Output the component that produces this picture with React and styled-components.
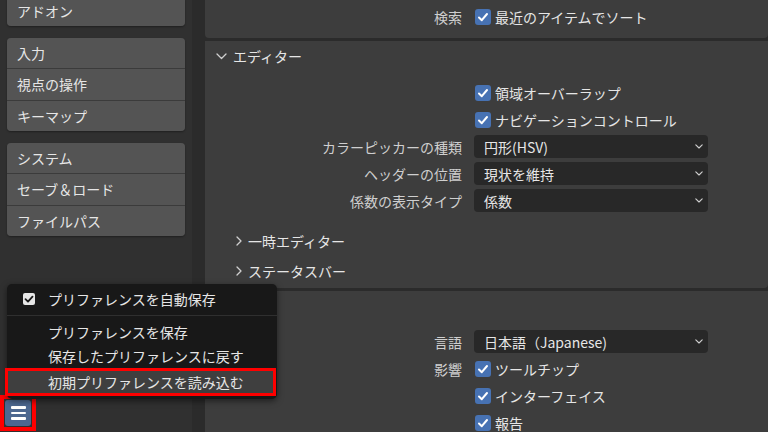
import React from "react";
import styled, { createGlobalStyle, css } from "styled-components";

const GlobalStyle = createGlobalStyle`
  html, body {
    margin: 0;
    padding: 0;
    background: #2b2b2b;
  }
  body {
    font-family: "Noto Sans CJK JP", "Noto Sans", "Liberation Sans", sans-serif;
    font-size: 14px;
    color: #e6e6e6;
  }
`;

const Window = styled.div`
  position: relative;
  display: flex;
  width: 768px;
  height: 432px;
  overflow: hidden;
  background: #2b2b2b;
`;

const Sidebar = styled.div`
  display: flex;
  flex-direction: column;
  gap: 11.5px;
  width: 192px;
  margin-top: -4.5px;
  background: #303030;
`;

const NavGroup = styled.div`
  display: flex;
  flex-direction: column;
  gap: 1px;
  margin: 0 7px;
  background: #3b3b3b;
  border-radius: 4px;
  overflow: hidden;
  box-shadow: 0 1px 2px rgba(0, 0, 0, 0.35);
`;

const NavItem = styled.div`
  display: flex;
  align-items: center;
  height: 30.5px;
  padding: 0 10px;
  background: #545454;
  color: #e6e6e6;
`;

const MenuButtonFrame = styled.div`
  margin-top: auto;
  margin-bottom: 1px;
  align-self: flex-start;
  display: flex;
  padding: 1px;
  border: 4px solid #ff0000;
`;

const MenuButton = styled.div`
  display: flex;
  flex-direction: column;
  justify-content: center;
  align-items: center;
  gap: 3px;
  width: 26px;
  height: 26px;
  border-radius: 3px;
  background: #4d6890;
`;

const Bar = styled.span`
  display: block;
  width: 15px;
  height: 2.5px;
  border-radius: 1px;
  background: #ffffff;
`;

const Gutter = styled.div`
  width: 13px;
  background: #2b2b2b;
`;

const Main = styled.div`
  flex: 1;
  display: flex;
  flex-direction: column;
  gap: 3px;
  background: #2b2b2b;
`;

const Panel = styled.section`
  display: flex;
  flex-direction: column;
  background: #3d3d3d;
  border-radius: 0 0 4px 4px;
  padding: ${(p) => p.$pad || "0 0 6px"};
  ${(p) =>
    p.$grow &&
    css`
      flex: 1;
    `}
`;

const PanelHeader = styled.div`
  display: flex;
  align-items: center;
  gap: 6px;
  height: 30px;
  padding-left: ${(p) => (p.$sub ? "31px" : "11px")};
  color: #e6e6e6;
`;

const Rows = styled.div`
  display: flex;
  flex-direction: column;
  padding: ${(p) => p.$pad || "0"};
`;

const Row = styled.div`
  display: grid;
  grid-template-columns: 257px 234px;
  column-gap: 12px;
  align-items: center;
  height: 27px;
`;

const Label = styled.span`
  text-align: right;
  color: #cfcfcf;
  white-space: nowrap;
`;

const CheckRow = styled.label`
  display: flex;
  align-items: center;
  gap: 4px;
  padding-left: 1px;
  color: #e6e6e6;
  white-space: nowrap;
`;

const Box = styled.span`
  display: flex;
  align-items: center;
  justify-content: center;
  width: 16px;
  height: 16px;
  border-radius: 3px;
  background: #4772b3;
`;

const Select = styled.div`
  display: flex;
  align-items: center;
  justify-content: space-between;
  height: 23px;
  padding: 0 5px 0 10px;
  border-radius: 4px;
  background: #282828;
  color: #e6e6e6;
  white-space: nowrap;
`;

const Popup = styled.div`
  position: absolute;
  left: 7px;
  top: 284px;
  width: 270px;
  padding: 3px 0 3px;
  border-radius: 5px;
  background: #181818;
  box-shadow: 0 2px 6px rgba(0, 0, 0, 0.5);
`;

const PopupItem = styled.div`
  display: flex;
  align-items: center;
  gap: 13px;
  height: 24px;
  padding-left: ${(p) => (p.$icon ? "16px" : "41px")};
  color: #e6e6e6;
  ${(p) =>
    p.$active &&
    css`
      margin: 0 1px 0 -2px;
      padding-left: 40px;
      height: 22px;
      background: #3f3f3f;
      border: 3px solid #ff0000;
    `}
`;

const PopupSeparator = styled.div`
  height: 1px;
  margin: 4px 0 4px;
  background: #2f2f2f;
`;

const Check = () => (
  <Box>
    <svg width="12" height="12" viewBox="0 0 12 12">
      <polyline points="2,6.5 4.8,9.2 10,3" fill="none" stroke="#fff" strokeWidth="2" strokeLinecap="round" strokeLinejoin="round" />
    </svg>
  </Box>
);

const MenuCheck = () => (
  <svg width="12" height="12" viewBox="0 0 12 12">
    <rect x="0" y="0" width="12" height="12" rx="2" fill="#e6e6e6" />
    <polyline points="2.5,6.2 5,8.6 9.5,3.6" fill="none" stroke="#181818" strokeWidth="1.8" strokeLinecap="round" strokeLinejoin="round" />
  </svg>
);

const ChevronDown = ({ size = 8 }) => (
  <svg width={size} height={size * 0.6} viewBox="0 0 10 6">
    <polyline points="1,1 5,5 9,1" fill="none" stroke="#d0d0d0" strokeWidth="1.4" strokeLinecap="round" strokeLinejoin="round" />
  </svg>
);

const ChevronRight = () => (
  <svg width="6" height="10" viewBox="0 0 6 10">
    <polyline points="1,1 5,5 1,9" fill="none" stroke="#d0d0d0" strokeWidth="1.3" strokeLinecap="round" strokeLinejoin="round" />
  </svg>
);

const HeaderChevron = () => (
  <svg width="11" height="7" viewBox="0 0 11 7">
    <polyline points="1,1 5.5,5.5 10,1" fill="none" stroke="#d0d0d0" strokeWidth="1.3" strokeLinecap="round" strokeLinejoin="round" />
  </svg>
);

const navGroups = [
  ["アドオン"],
  ["入力", "視点の操作", "キーマップ"],
  ["システム", "セーブ＆ロード", "ファイルパス"],
];

const CheckField = ({ label, text }) => (
  <Row>
    <Label>{label}</Label>
    <CheckRow>
      <Check />
      {text}
    </CheckRow>
  </Row>
);

const SelectField = ({ label, value }) => (
  <Row>
    <Label>{label}</Label>
    <Select>
      {value}
      <ChevronDown />
    </Select>
  </Row>
);

export default function App() {
  return (
    <>
      <GlobalStyle />
      <Window>
        <Sidebar>
          {navGroups.map((group, i) => (
            <NavGroup key={i}>
              {group.map((name) => (
                <NavItem key={name}>{name}</NavItem>
              ))}
            </NavGroup>
          ))}
          <MenuButtonFrame>
            <MenuButton>
              <Bar />
              <Bar />
              <Bar />
            </MenuButton>
          </MenuButtonFrame>
        </Sidebar>
        <Gutter />
        <Main>
          <Panel $pad="3px 0 8px">
            <CheckField label="検索" text="最近のアイテムでソート" />
          </Panel>
          <Panel $pad="0 0 2px">
            <PanelHeader>
              <HeaderChevron />
              エディター
            </PanelHeader>
            <Rows $pad="8px 0 12px">
              <CheckField label="" text="領域オーバーラップ" />
              <CheckField label="" text="ナビゲーションコントロール" />
              <SelectField label="カラーピッカーの種類" value="円形(HSV)" />
              <SelectField label="ヘッダーの位置" value="現状を維持" />
              <SelectField label="係数の表示タイプ" value="係数" />
            </Rows>
            <PanelHeader $sub>
              <ChevronRight />
              一時エディター
            </PanelHeader>
            <PanelHeader $sub>
              <ChevronRight />
              ステータスバー
            </PanelHeader>
          </Panel>
          <Panel $grow>
            <PanelHeader>
              <HeaderChevron />
              翻訳
            </PanelHeader>
            <Rows $pad="7px 0 0">
              <SelectField label="言語" value="日本語（Japanese)" />
              <CheckField label="影響" text="ツールチップ" />
              <CheckField label="" text="インターフェイス" />
              <CheckField label="" text="報告" />
            </Rows>
          </Panel>
        </Main>
        <Popup>
          <PopupItem $icon>
            <MenuCheck />
            プリファレンスを自動保存
          </PopupItem>
          <PopupSeparator />
          <PopupItem>プリファレンスを保存</PopupItem>
          <PopupItem>保存したプリファレンスに戻す</PopupItem>
          <PopupItem $active>初期プリファレンスを読み込む</PopupItem>
        </Popup>
      </Window>
    </>
  );
}
